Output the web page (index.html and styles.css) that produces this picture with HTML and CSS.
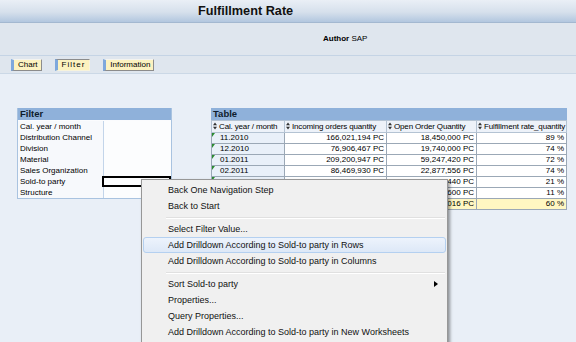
FILE: index.html
```html
<!DOCTYPE html>
<html lang="en">
<head>
  <meta charset="UTF-8">
  <title>Fulfillment Rate</title>
  <link rel="stylesheet" href="styles.css">
</head>
<body>

  <div class="titlebar">
    <h1>Fulfillment Rate</h1>
  </div>

  <div class="infobar">
    <span class="author"><b>Author</b> SAP</span>
  </div>

  <div class="tabbar">
    <button class="tab">Chart</button>
    <button class="tab tab-active">Filter</button>
    <button class="tab">Information</button>
  </div>

  <div class="content">

    <div class="panel filter">
      <div class="panel-head">Filter</div>
      <div class="filter-grid">
        <div class="f-label">Cal. year / month</div><div class="f-value"></div>
        <div class="f-label">Distribution Channel</div><div class="f-value"></div>
        <div class="f-label">Division</div><div class="f-value"></div>
        <div class="f-label">Material</div><div class="f-value"></div>
        <div class="f-label">Sales Organization</div><div class="f-value"></div>
        <div class="f-label">Sold-to party</div><div class="f-value selected"></div>
        <div class="f-label">Structure</div><div class="f-value"></div>
      </div>
    </div>

    <div class="panel results">
      <div class="panel-head">Table</div>
      <table class="grid">
        <colgroup>
          <col class="c1"><col class="c2"><col class="c3"><col class="c4">
        </colgroup>
        <tr class="head">
          <th><svg class="sort" viewBox="0 0 4 8"><path d="M0 3.2L2 0.4L4 3.2Z M0 4.8L2 7.6L4 4.8Z"/></svg>Cal. year / month</th>
          <th><svg class="sort" viewBox="0 0 4 8"><path d="M0 3.2L2 0.4L4 3.2Z M0 4.8L2 7.6L4 4.8Z"/></svg>Incoming orders quantity</th>
          <th><svg class="sort" viewBox="0 0 4 8"><path d="M0 3.2L2 0.4L4 3.2Z M0 4.8L2 7.6L4 4.8Z"/></svg>Open Order Quantity</th>
          <th><svg class="sort" viewBox="0 0 4 8"><path d="M0 3.2L2 0.4L4 3.2Z M0 4.8L2 7.6L4 4.8Z"/></svg>Fulfillment rate_quantity</th>
        </tr>
        <tr>
          <td class="key">11.2010</td><td class="num">166,021,194 PC</td><td class="num">18,450,000 PC</td><td class="num">89 %</td>
        </tr>
        <tr>
          <td class="key">12.2010</td><td class="num">76,906,467 PC</td><td class="num">19,740,000 PC</td><td class="num">74 %</td>
        </tr>
        <tr>
          <td class="key">01.2011</td><td class="num">209,200,947 PC</td><td class="num">59,247,420 PC</td><td class="num">72 %</td>
        </tr>
        <tr>
          <td class="key">02.2011</td><td class="num">86,469,930 PC</td><td class="num">22,877,556 PC</td><td class="num">74 %</td>
        </tr>
        <tr>
          <td class="key">03.2011</td><td class="num">134,266,271 PC</td><td class="num">106,070,440 PC</td><td class="num">21 %</td>
        </tr>
        <tr>
          <td class="key">04.2011</td><td class="num">96,211,503 PC</td><td class="num">85,628,600 PC</td><td class="num">11 %</td>
        </tr>
        <tr class="total">
          <td class="key">Result</td><td class="num">780,053,321 PC</td><td class="num">312,017,016 PC</td><td class="num">60 %</td>
        </tr>
      </table>
    </div>

  </div>

  <div class="ctxmenu">
    <div class="item">Back One Navigation Step</div>
    <div class="item">Back to Start</div>
    <div class="sep"></div>
    <div class="item">Select Filter Value...</div>
    <div class="item hover">Add Drilldown According to Sold-to party in Rows</div>
    <div class="item">Add Drilldown According to Sold-to party in Columns</div>
    <div class="sep"></div>
    <div class="item sub">Sort Sold-to party<span class="arrow"></span></div>
    <div class="item">Properties...</div>
    <div class="item">Query Properties...</div>
    <div class="item">Add Drilldown According to Sold-to party in New Worksheets</div>
  </div>

</body>
</html>
```

FILE: styles.css
```css
html, body {
  height: 342px;
  overflow: hidden;
}

body {
  margin: 0;
  background-color: #e9eff7;
  color: #000;
  font-family: "Liberation Sans", Arial, sans-serif;
  font-size: 8px;
  position: relative;
}

/* page header */
.titlebar {
  height: 22px;
  background: linear-gradient(#eaeff6, #d6e0ec 55%, #b2c7df);
  border-bottom: 1px solid #a3b8d0;
}

.titlebar h1 {
  margin: 0 0 0 198px;
  font-size: 12.7px;
  line-height: 22px;
  font-weight: bold;
  color: #111;
}

.infobar {
  height: 32px;
  line-height: 32px;
  padding-left: 323px;
  background-color: #dfe6ee;
  border-bottom: 1px solid #c5d4e5;
}

.tabbar {
  height: 17px;
  display: flex;
  align-items: center;
  padding-left: 11px;
  background-color: #dfe6ee;
  border-bottom: 1px solid #cbd8e6;
}

.tab {
  height: 12px;
  margin: 0 13px 0 0;
  padding: 0 3px 0 4px;
  font-family: "Liberation Sans", Arial, sans-serif;
  font-size: 8px;
  line-height: 10px;
  color: #000;
  background-color: #fcf2bf;
  border: 1px solid;
  border-color: #f4f4f0 #8c8c8c #8c8c8c #f4f4f0;
  border-left: 3px solid #7ea8dc;
  cursor: pointer;
}

.tab-active {
  letter-spacing: 1px;
  padding-right: 4px;
  border-color: #8c8c8c #f7f3dc #f7f3dc #7ea8dc;
  border-left: 3px solid #7ea8dc;
}

/* filter + table */
.content {
  display: flex;
  align-items: flex-start;
  gap: 39px;
  padding: 34px 0 0 17px;
}

.panel-head {
  height: 12px;
  line-height: 12px;
  padding-left: 2px;
  background-color: #8fb1da;
  font-size: 9.5px;
  font-weight: bold;
  color: #0e1c2c;
}

.filter {
  width: 153px;
  border: 1px solid #a9c3e0;
  border-top: none;
}

.filter-grid {
  display: grid;
  grid-template-columns: 85px 1fr;
  grid-auto-rows: 11px;
  padding-top: 1px;
  background-color: #fbfcfe;
}

.f-label {
  padding-left: 2px;
  line-height: 11px;
  white-space: nowrap;
  background-color: #f7f9fc;
}

.f-value {
  border-left: 1px solid #c3d5ea;
  background-color: #fcfdfe;
}

.f-value.selected {
  margin-left: -1px;
  border: 2px solid #000;
}

.results {
  width: 356px;
}

.grid {
  width: 100%;
  border-collapse: collapse;
  table-layout: fixed;
  background-color: #fff;
}

.grid .c1 { width: 73px; }
.grid .c2 { width: 102px; }
.grid .c3 { width: 90px; }

.grid th,
.grid td {
  height: 10px;
  padding: 0 2px;
  line-height: 10px;
  border: 1px solid #9ba8b6;
  white-space: nowrap;
  overflow: hidden;
  font-weight: normal;
}

.grid .head th {
  height: 11px;
  padding: 0 1px;
  text-align: left;
  letter-spacing: -0.15px;
  background-color: #edf2f9;
  border-color: #b4c3d3;
}

.sort {
  width: 4px;
  height: 8px;
  margin-right: 2px;
  vertical-align: -1px;
  fill: #333;
}

.grid td.key {
  position: relative;
  padding-left: 8px;
  background-color: #e9f0f9;
}

.grid td.key::before {
  content: "";
  position: absolute;
  top: 0;
  left: 0;
  border-top: 4px solid #2a8a30;
  border-right: 3px solid transparent;
}

.grid td.num {
  text-align: right;
}

.grid .total td {
  background-color: #fff7c2;
}

/* context menu */
.ctxmenu {
  position: absolute;
  left: 141px;
  top: 179px;
  width: 305px;
  height: 168px;
  padding: 2px 0;
  background-color: #f0f0f0;
  border: 1px solid #979797;
  box-shadow: 2px 2px 3px rgba(0, 0, 0, 0.4);
  font-size: 9px;
  color: #111;
}

.item {
  height: 14px;
  line-height: 14px;
  margin: 0 1px;
  padding-left: 24px;
  border: 1px solid transparent;
  border-radius: 3px;
  white-space: nowrap;
}

.item.hover {
  background: linear-gradient(#edf3fc, #dde8f7);
  border-color: #b4d0f0;
}

.item.sub {
  display: flex;
  justify-content: space-between;
  align-items: center;
}

.arrow {
  margin-right: 7px;
  border-left: 4px solid #000;
  border-top: 3.5px solid transparent;
  border-bottom: 3.5px solid transparent;
}

.sep {
  height: 1px;
  margin: 3px 2px 2px 24px;
  background-color: #e0e0e0;
  border-bottom: 1px solid #fff;
}
```
